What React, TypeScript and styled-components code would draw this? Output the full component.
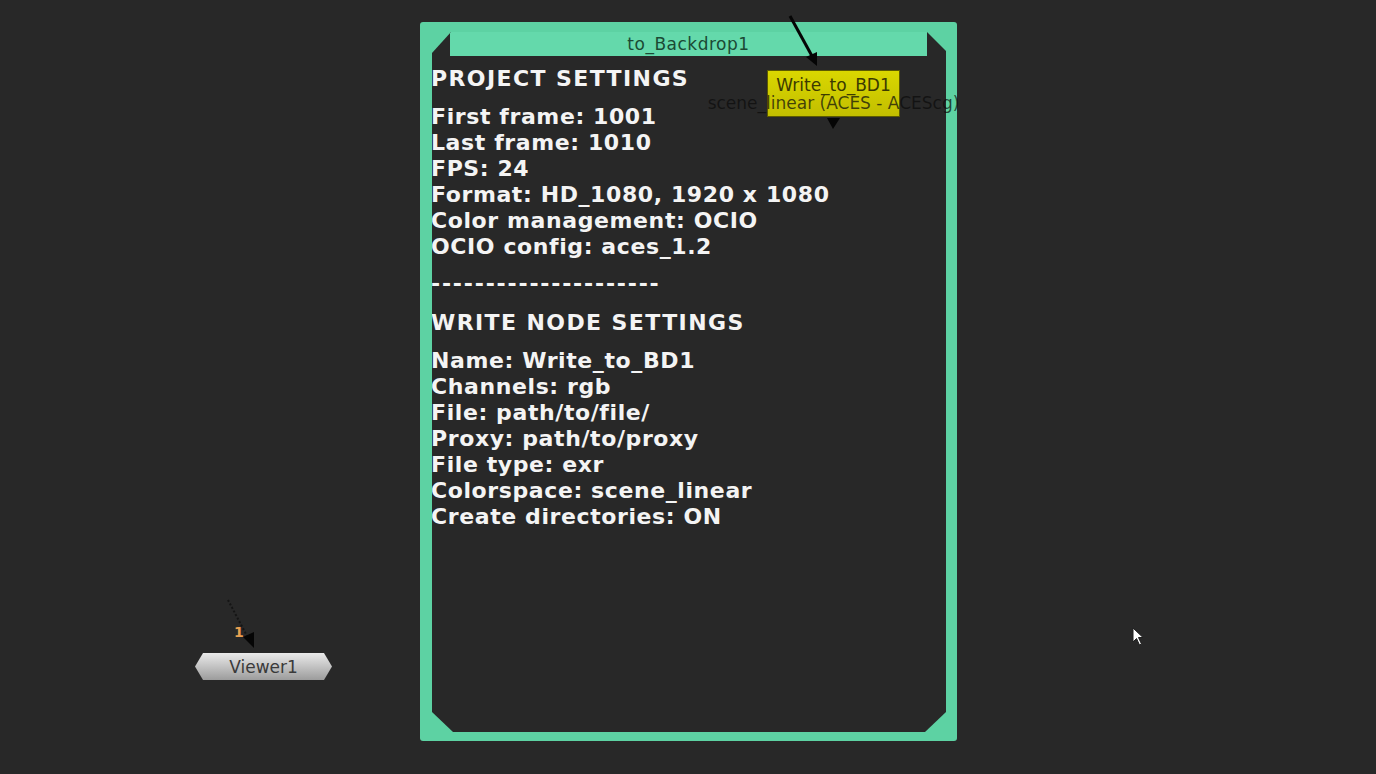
import styled, { createGlobalStyle } from 'styled-components';

const GlobalStyle = createGlobalStyle`
  html, body {
    margin: 0;
    padding: 0;
    background: #282828;
  }
`;

const Canvas = styled.div`
  position: relative;
  width: 1376px;
  height: 774px;
  overflow: hidden;
  background: #282828;
  font-family: 'DejaVu Sans', Verdana, sans-serif;
`;

const Backdrop = styled.div`
  position: absolute;
  left: 420px;
  top: 22px;
  width: 537px;
  height: 719px;
  box-sizing: border-box;
  padding: 10px 11px 9px 12px;
  background: #5dd2a3;
  border-radius: 3px;
  display: flex;
`;

const Inner = styled.div`
  flex: 1;
  display: flex;
  flex-direction: column;
  background: #282828;
  clip-path: polygon(
    19px 0,
    calc(100% - 19px) 0,
    100% 19px,
    100% calc(100% - 20px),
    calc(100% - 21px) 100%,
    21px 100%,
    0 calc(100% - 20px),
    0 21px
  );
`;

const TitleBar = styled.div`
  height: 24px;
  margin: 0 19px 0 18px;
  background: #64d9ab;
  color: #1b4a34;
  font-size: 17px;
  letter-spacing: 0.5px;
  line-height: 24px;
  text-align: center;
`;

const Label = styled.div`
  margin: 10px 0 0 -1px;
  color: #f4f4f4;
  font-weight: bold;
  font-size: 22px;
  letter-spacing: 0.6px;
  line-height: 26px;
  white-space: pre;
`;

const Heading = styled.div`
  margin-bottom: 12px;
  letter-spacing: 1.4px;
`;

const Group = styled.div`
  margin-bottom: 11px;
`;

const Line = styled.div``;

const Divider = styled.div`
  margin-bottom: 13px;
  letter-spacing: 1.8px;
`;

const WriteNode = styled.div`
  position: absolute;
  left: 767px;
  top: 70px;
  width: 133px;
  height: 47px;
  box-sizing: border-box;
  border: 1px solid #5c5a00;
  background: linear-gradient(#dad700, #c2be00);
  display: flex;
  flex-direction: column;
  align-items: center;
  padding-top: 5px;
`;

const NodeName = styled.div<{ $color: string }>`
  font-size: 17px;
  line-height: 18px;
  color: ${(p) => p.$color};
  white-space: nowrap;
`;

const NodeSub = styled.div`
  font-size: 17px;
  line-height: 18px;
  color: rgba(12, 12, 12, 0.72);
  white-space: nowrap;
`;

const ViewerNode = styled.div`
  position: absolute;
  left: 195px;
  top: 653px;
  width: 137px;
  height: 27px;
  background: linear-gradient(#eaeaea, #9c9c9c);
  clip-path: polygon(8px 0, calc(100% - 8px) 0, 100% 50%, calc(100% - 8px) 100%, 8px 100%, 0 50%);
  display: flex;
  align-items: center;
  justify-content: center;
`;

const InputNumber = styled.div`
  position: absolute;
  left: 234px;
  top: 624px;
  color: #e8a050;
  font-size: 14px;
  font-weight: bold;
`;

const Wires = styled.svg`
  position: absolute;
  left: 0;
  top: 0;
  pointer-events: none;
`;

const Cursor = styled.svg`
  position: absolute;
  left: 1132px;
  top: 627px;
`;

const projectLines = [
  'First frame: 1001',
  'Last frame: 1010',
  'FPS: 24',
  'Format: HD_1080, 1920 x 1080',
  'Color management: OCIO',
  'OCIO config: aces_1.2',
];

const writeLines = [
  'Name: Write_to_BD1',
  'Channels: rgb',
  'File: path/to/file/',
  'Proxy: path/to/proxy',
  'File type: exr',
  'Colorspace: scene_linear',
  'Create directories: ON',
];

const App = () => {
  return (
    <>
      <GlobalStyle />
      <Canvas>
        <Backdrop>
          <Inner>
            <TitleBar>to_Backdrop1</TitleBar>
            <Label>
              <Heading>PROJECT SETTINGS</Heading>
              <Group>
                {projectLines.map((l) => (
                  <Line key={l}>{l}</Line>
                ))}
              </Group>
              <Divider>{'-'.repeat(21)}</Divider>
              <Heading>WRITE NODE SETTINGS</Heading>
              <Group>
                {writeLines.map((l) => (
                  <Line key={l}>{l}</Line>
                ))}
              </Group>
            </Label>
          </Inner>
        </Backdrop>

        <Wires width="1376" height="774">
          <line x1="790" y1="16" x2="812" y2="56" stroke="#050505" strokeWidth="3" />
          <polygon points="817,66 806,57 817,52" fill="#050505" />
          <polygon points="827,118 840,118 833,129" fill="#050505" />
          <line
            x1="228"
            y1="600"
            x2="247"
            y2="636"
            stroke="#151515"
            strokeWidth="2"
            strokeDasharray="2 2"
          />
          <polygon points="254,648 243,637 254,632" fill="#050505" />
        </Wires>

        <WriteNode>
          <NodeName $color="#3b3a00">Write_to_BD1</NodeName>
          <NodeSub>scene_linear (ACES - ACEScg)</NodeSub>
        </WriteNode>

        <InputNumber>1</InputNumber>
        <ViewerNode>
          <NodeName $color="#3a3a3a">Viewer1</NodeName>
        </ViewerNode>

        <Cursor width="14" height="20" viewBox="0 0 14 20">
          <path d="M1 1 L1 15 L4.5 11.5 L7.5 18 L9.5 17 L6.5 10.5 L11 10.5 Z" fill="#ffffff" stroke="#202020" strokeWidth="1" />
        </Cursor>
      </Canvas>
    </>
  );
};

export default App;
